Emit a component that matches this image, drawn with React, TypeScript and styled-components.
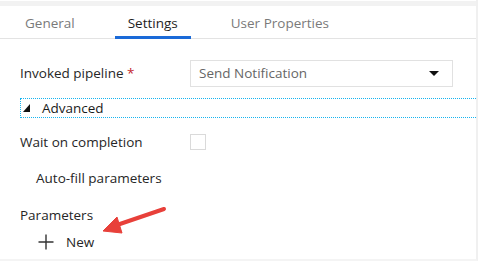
import { FC } from "react";
import styled, { createGlobalStyle } from "styled-components";

const GlobalStyle = createGlobalStyle`
  html, body {
    margin: 0;
    padding: 0;
    background: #fff;
  }
  body {
    font-family: "Open Sans", "Noto Sans", sans-serif;
    color: #262626;
  }
`;

const tabs = ["General", "Settings", "User Properties"];

const App: FC = () => {
  return (
    <>
      <GlobalStyle />
      <Frame>
        <TopStrip />
        <TabBar>
          {tabs.map((t) => (
            <Tab key={t} $active={t === "Settings"}>
              {t}
            </Tab>
          ))}
        </TabBar>
        <Body>
          <FieldRow>
            <Label>
              Invoked pipeline <Required>*</Required>
            </Label>
            <Select>
              <span>Send Notification</span>
              <Caret />
            </Select>
          </FieldRow>
          <Advanced>
            <Triangle />
            Advanced
          </Advanced>
          <FieldRow $height={34} $gap={7}>
            <Label>Wait on completion</Label>
            <Checkbox />
          </FieldRow>
          <SubLabel>Auto-fill parameters</SubLabel>
          <Label>Parameters</Label>
          <NewButton>
            <svg width="16" height="16" viewBox="0 0 16 16">
              <path d="M8 0.5v15M0.5 8h15" stroke="#333" strokeWidth="1.4" fill="none" />
            </svg>
            New
          </NewButton>
        </Body>
        <Arrow width="80" height="40" viewBox="0 0 80 40">
          <path d="M64 5 L14 22" stroke="#e8403a" strokeWidth="4" strokeLinecap="round" fill="none" />
          <path d="M3 27 L17 13 L22 29 Z" fill="#e8403a" strokeLinejoin="round" stroke="#e8403a" strokeWidth="1" />
        </Arrow>
      </Frame>
    </>
  );
};

export default App;

const Frame = styled.div`
  position: relative;
  width: 478px;
  height: 261px;
  box-sizing: border-box;
  border-right: 2px solid #f0f0f0;
  border-bottom: 2px solid #f4f4f4;
  overflow: hidden;
`;

const TopStrip = styled.div`
  height: 5px;
  margin-top: 1px;
  background: #f2f2f2;
`;

const TabBar = styled.div`
  display: flex;
  height: 33px;
  padding-left: 12px;
  border-bottom: 1px solid #e3e3e3;
  box-sizing: border-box;
`;

const Tab = styled.div<{ $active?: boolean }>`
  padding: 8px 13px 0;
  margin-right: 27px;
  font-size: 13.5px;
  color: ${(p) => (p.$active ? "#1e1e1e" : "#7a7a7a")};
  border-bottom: 3px solid ${(p) => (p.$active ? "#1a6ad8" : "transparent")};
  box-sizing: border-box;
  height: 33px;
`;

const Body = styled.div`
  display: flex;
  flex-direction: column;
  padding: 20px 0 0 20px;
`;

const FieldRow = styled.div<{ $height?: number; $gap?: number }>`
  display: grid;
  grid-template-columns: 170px auto;
  align-items: center;
  height: ${(p) => p.$height ?? 28}px;
  margin-top: ${(p) => p.$gap ?? 0}px;
`;

const Label = styled.div`
  font-size: 13.5px;
  color: #262626;
  line-height: 18px;
`;

const Required = styled.span`
  color: #c4262e;
`;

const Select = styled.div`
  display: flex;
  align-items: center;
  justify-content: space-between;
  width: 263px;
  height: 27px;
  box-sizing: border-box;
  border: 1px solid #e1e1e1;
  padding: 0 13px 0 8px;
  font-size: 13.5px;
  color: #666;
`;

const Caret = styled.span`
  width: 0;
  height: 0;
  border-left: 5px solid transparent;
  border-right: 5px solid transparent;
  border-top: 5px solid #111;
`;

const Advanced = styled.div`
  display: flex;
  align-items: center;
  gap: 12px;
  margin-top: 11px;
  height: 20px;
  margin-right: -4px;
  box-sizing: border-box;
  border: 1px dotted #16b4f0;
  padding-left: 2px;
  font-size: 13.5px;
  color: #1a1a1a;
`;

const Triangle = styled.span`
  width: 0;
  height: 0;
  border-left: 7px solid transparent;
  border-bottom: 8px solid #111;
`;

const Checkbox = styled.div`
  width: 16px;
  height: 16px;
  box-sizing: border-box;
  border: 1px solid #dadada;
`;

const SubLabel = styled.div`
  font-size: 13.5px;
  padding-left: 16px;
  margin-top: 10px;
  margin-bottom: 19px;
  line-height: 18px;
`;

const NewButton = styled.div`
  display: flex;
  align-items: center;
  gap: 12px;
  padding-left: 18px;
  margin-top: 9px;
  font-size: 13.5px;
  color: #262626;
`;

const Arrow = styled.svg`
  position: absolute;
  left: 100px;
  top: 204px;
`;
